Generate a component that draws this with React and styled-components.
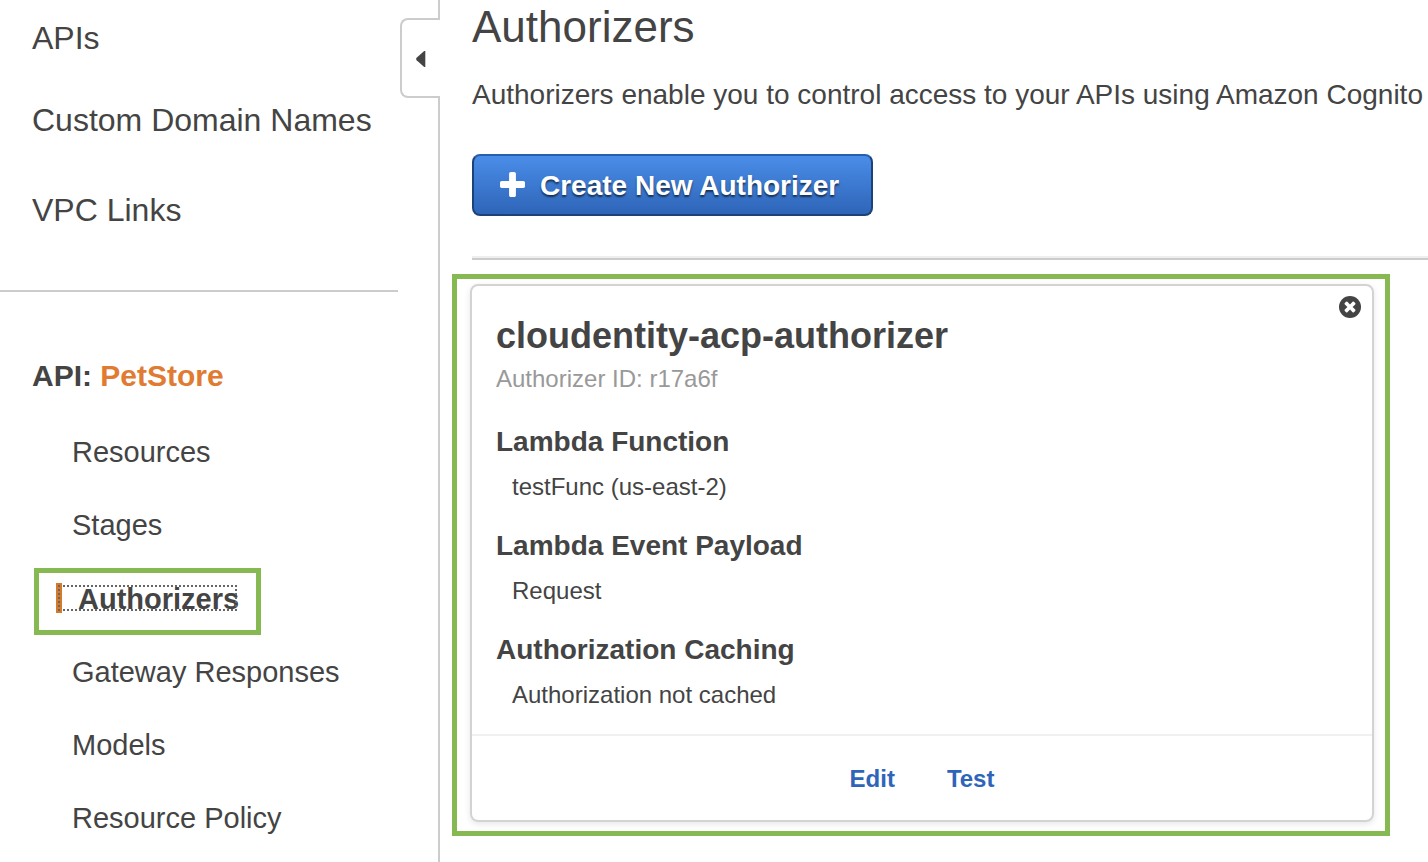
import React from "react";
import styled, { createGlobalStyle } from "styled-components";

const GlobalStyle = createGlobalStyle`
  *, *::before, *::after { box-sizing: border-box; }
  body {
    margin: 0;
    background: #fff;
    color: #444;
    font-family: "Helvetica Neue", "Liberation Sans", Arial, sans-serif;
    font-size: 24px;
    overflow-x: hidden;
  }
  h1, h2, p, ul, dl, dd { margin: 0; padding: 0; }
  ul { list-style: none; }
`;

const Page = styled.div`
  display: flex;
  min-height: 100vh;
`;

const Sidebar = styled.nav`
  position: relative;
  flex: none;
  width: 440px;
  padding-top: 18px;
  border-right: 2px solid #ccc;
`;

const CollapseButton = styled.button`
  position: absolute;
  top: 18px;
  right: -2px;
  width: 40px;
  height: 80px;
  padding: 2px 0 0;
  display: flex;
  align-items: center;
  justify-content: center;
  border: 2px solid #ccc;
  border-right: 0;
  border-radius: 8px 0 0 8px;
  background: #fff;
  cursor: pointer;
`;

const TopLinks = styled.ul`
  display: flex;
  flex-direction: column;
  padding: 0 32px 60px;
  border-bottom: 2px solid #ccc;
  margin-right: 40px;
`;

const TopItem = styled.li`
  margin-bottom: ${(p) => p.$space || 0}px;
`;

const NavLink = styled.a`
  color: #444;
  text-decoration: none;
  white-space: nowrap;
  font-size: ${(p) => (p.$large ? 32 : 29)}px;
  line-height: 40px;
  display: block;
`;

const ApiLabel = styled.p`
  padding: 64px 32px 19px;
  font-size: 30px;
  line-height: 40px;
  font-weight: bold;
`;

const ApiName = styled.span`
  color: #e07b31;
`;

const SubItem = styled.li`
  height: 73px;
  padding-left: 72px;
  display: flex;
  align-items: center;
`;

const ActiveItem = styled.li`
  width: 227px;
  margin: 7px 0 0 34px;
  padding: 10px 0 17px 17px;
  border: 5px solid #87b953;
  display: flex;
`;

const ActiveLink = styled.a`
  padding: 2px 0 0 16px;
  border-left: 6px solid #d47a2c;
  outline: 2px dotted #666;
  outline-offset: -4px;
  color: #444;
  font-size: 29px;
  font-weight: bold;
  line-height: 28px;
  text-decoration: none;
`;

const Main = styled.main`
  flex: 1;
  min-width: 0;
  padding-left: 12px;
  overflow: hidden;
`;

const Header = styled.header`
  margin-left: 20px;
  padding-bottom: 42px;
  border-bottom: 2px solid #ccc;
  box-shadow: inset 0 -2px #eee;
`;

const Title = styled.h1`
  font-size: 44px;
  line-height: 54px;
  font-weight: normal;
`;

const Description = styled.p`
  margin: 25px 0 43px;
  font-size: 28px;
  line-height: 32px;
  white-space: nowrap;
`;

const CreateButton = styled.button`
  display: flex;
  align-items: center;
  gap: 15px;
  min-width: 401px;
  height: 62px;
  padding: 0 26px;
  border: 2px solid #1b4279;
  border-top-color: #2560ad;
  border-radius: 8px;
  background: linear-gradient(#4a8de8, #2e65b8);
  color: #fff;
  font-family: inherit;
  font-size: 28px;
  line-height: 32px;
  font-weight: bold;
  text-shadow: 0 2px 2px rgba(0, 0, 0, 0.6);
  cursor: pointer;

  svg {
    margin-bottom: 2px;
  }
`;

const ButtonLabel = styled.span`
  padding-top: 2px;
`;

const Highlight = styled.section`
  margin: 14px 38px 26px 0;
  padding: 5px 11px 9px 13px;
  border: 5px solid #87b953;
`;

const Card = styled.article`
  position: relative;
  border: 2px solid #d3d3d3;
  border-radius: 8px;
  box-shadow: 0 2px 6px rgba(0, 0, 0, 0.1);
`;

const CardBody = styled.div`
  padding: 28px 24px 14px;
`;

const CardTitle = styled.h2`
  font-size: 36px;
  line-height: 44px;
`;

const CardId = styled.p`
  margin-bottom: 22px;
  color: #999;
  line-height: 42px;
`;

const Details = styled.dl`
  display: flex;
  flex-direction: column;
  gap: 14px;
`;

const Term = styled.dt`
  font-size: 28px;
  line-height: 40px;
  font-weight: bold;
`;

const Value = styled.dd`
  padding-left: 16px;
  line-height: 50px;
`;

const CloseButton = styled.button`
  position: absolute;
  top: 10px;
  right: 11px;
  display: flex;
  padding: 0;
  border: 0;
  background: none;
  cursor: pointer;
`;

const CardFooter = styled.footer`
  display: flex;
  align-items: center;
  justify-content: center;
  gap: 52px;
  height: 86px;
  padding-top: 2px;
  border-top: 2px solid #f0f0f0;
`;

const Action = styled.button`
  padding: 0;
  border: 0;
  background: none;
  color: #2e65b8;
  font: bold 24px/32px "Helvetica Neue", "Liberation Sans", Arial, sans-serif;
  cursor: pointer;
`;

const details = [
  ["Lambda Function", "testFunc (us-east-2)"],
  ["Lambda Event Payload", "Request"],
  ["Authorization Caching", "Authorization not cached"],
];

const subLinks = [
  "Resources",
  "Stages",
  "Authorizers",
  "Gateway Responses",
  "Models",
  "Resource Policy",
];

const ArrowLeft = () => (
  <svg width="10" height="16" viewBox="0 0 10 16" aria-hidden="true">
    <path d="M9.3 0v16H8.2L.6 9.2Q-.4 8 .6 6.8L8.2 0Z" fill="#444" />
  </svg>
);

const Plus = () => (
  <svg width="25" height="25" viewBox="192 128 1408 1408" aria-hidden="true">
    <path
      fill="#fff"
      d="M1600 736v192q0 40-28 68t-68 28h-416v416q0 40-28 68t-68 28h-192q-40 0-68-28t-28-68v-416h-416q-40 0-68-28t-28-68v-192q0-40 28-68t68-28h416v-416q0-40 28-68t68-28h192q40 0 68 28t28 68v416h416q40 0 68 28t28 68z"
    />
  </svg>
);

const CircleX = () => (
  <svg width="22" height="22" viewBox="128 128 1536 1536" aria-hidden="true">
    <circle cx="896" cy="896" r="768" fill="#444" />
    <path
      fill="#fff"
      d="M1277 1122q0-26-19-45l-181-181 181-181q19-19 19-45 0-27-19-46l-90-90q-19-18-46-18-26 0-45 18l-181 181-181-181q-19-18-45-18-27 0-46 18l-90 90q-19 19-19 46 0 26 19 45l181 181-181 181q-19 19-19 45 0 27 19 46l90 90q19 18 46 18 26 0 45-18l181-181 181 181q19 18 45 18 27 0 46-18l90-90q19-19 19-46z"
    />
  </svg>
);

export default function App() {
  return (
    <>
      <GlobalStyle />
      <Page>
        <Sidebar>
          <TopLinks>
            <TopItem $space={42}>
              <NavLink $large href="#apis">APIs</NavLink>
            </TopItem>
            <TopItem $space={50}>
              <NavLink $large href="#domains">Custom Domain Names</NavLink>
            </TopItem>
            <TopItem>
              <NavLink $large href="#vpc">VPC Links</NavLink>
            </TopItem>
          </TopLinks>
          <ApiLabel>
            API: <ApiName>PetStore</ApiName>
          </ApiLabel>
          <ul>
            {subLinks.map((name) =>
              name === "Authorizers" ? (
                <ActiveItem key={name}>
                  <ActiveLink href="#authorizers" aria-current="page">{name}</ActiveLink>
                </ActiveItem>
              ) : (
                <SubItem key={name}>
                  <NavLink href={"#" + name.toLowerCase().replace(" ", "-")}>{name}</NavLink>
                </SubItem>
              )
            )}
          </ul>
          <CollapseButton aria-label="Collapse navigation">
            <ArrowLeft />
          </CollapseButton>
        </Sidebar>
        <Main>
          <Header>
            <Title>Authorizers</Title>
            <Description>
              Authorizers enable you to control access to your APIs using Amazon Cognito
            </Description>
            <CreateButton>
              <Plus />
              <ButtonLabel>Create New Authorizer</ButtonLabel>
            </CreateButton>
          </Header>
          <Highlight>
            <Card>
              <CardBody>
                <CardTitle>cloudentity-acp-authorizer</CardTitle>
                <CardId>Authorizer ID: r17a6f</CardId>
                <Details>
                  {details.map(([term, value]) => (
                    <div key={term}>
                      <Term>{term}</Term>
                      <Value>{value}</Value>
                    </div>
                  ))}
                </Details>
              </CardBody>
              <CloseButton aria-label="Delete authorizer">
                <CircleX />
              </CloseButton>
              <CardFooter>
                <Action>Edit</Action>
                <Action>Test</Action>
              </CardFooter>
            </Card>
          </Highlight>
        </Main>
      </Page>
    </>
  );
}
